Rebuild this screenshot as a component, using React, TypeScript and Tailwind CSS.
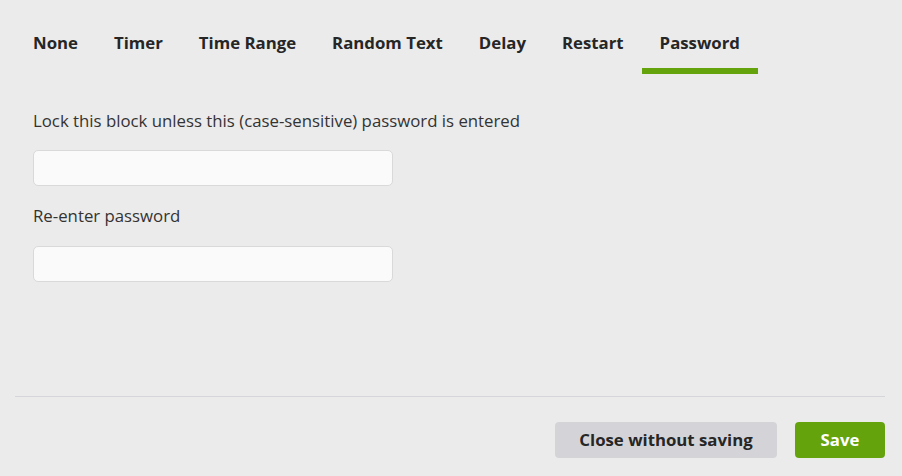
import React, { useState } from "react";

const TABS = ["None", "Timer", "Time Range", "Random Text", "Delay", "Restart", "Password"];

export default function App() {
  const [active, setActive] = useState("Password");
  const [pw, setPw] = useState("");
  const [pw2, setPw2] = useState("");

  return (
    <div
      className="w-[902px] h-[476px] bg-[#ebebeb] text-[#2b2b2b] overflow-hidden"
      style={{ fontFamily: "'Open Sans', 'Noto Sans', sans-serif" }}
    >
      <div className="ml-[15px] w-[870px] flex flex-col">
        {/* Tabs */}
        <div className="flex">
          {TABS.map((t) => (
            <button
              key={t}
              onClick={() => setActive(t)}
              className={`px-[18px] pt-[31px] pb-[13px] border-b-[6px] text-[16.8px] leading-[24px] font-bold text-[#262626] ${
                active === t ? "border-[#65a30d]" : "border-transparent"
              }`}
            >
              {t}
            </button>
          ))}
        </div>

        {/* Password form */}
        <div className="px-[18px] pt-[35px] flex flex-col">
          <label className="text-[16.8px] leading-[24px] text-[#333]">
            Lock this block unless this (case-sensitive) password is entered
          </label>
          <input
            type="password"
            value={pw}
            onChange={(e) => setPw(e.target.value)}
            className="mt-[17px] w-[360px] h-[36px] rounded-[5px] border border-[#d9d9d9] bg-[#fafafa] px-3 outline-none"
          />
          <label className="mt-[18px] text-[16.8px] leading-[24px] text-[#333]">Re-enter password</label>
          <input
            type="password"
            value={pw2}
            onChange={(e) => setPw2(e.target.value)}
            className="mt-[18px] w-[360px] h-[36px] rounded-[5px] border border-[#d9d9d9] bg-[#fafafa] px-3 outline-none"
          />
        </div>

        {/* Footer */}
        <div className="mt-[114px] border-t border-[#d6d6da]" />
        <div className="mt-[25px] flex justify-end gap-[18px]">
          <button className="w-[222px] h-[36px] rounded-[4px] bg-[#d4d4d8] text-[16.8px] font-bold text-[#262626]">
            Close without saving
          </button>
          <button className="w-[90px] h-[36px] rounded-[4px] bg-[#65a30d] text-[16.8px] font-bold text-white">
            Save
          </button>
        </div>
      </div>
    </div>
  );
}
